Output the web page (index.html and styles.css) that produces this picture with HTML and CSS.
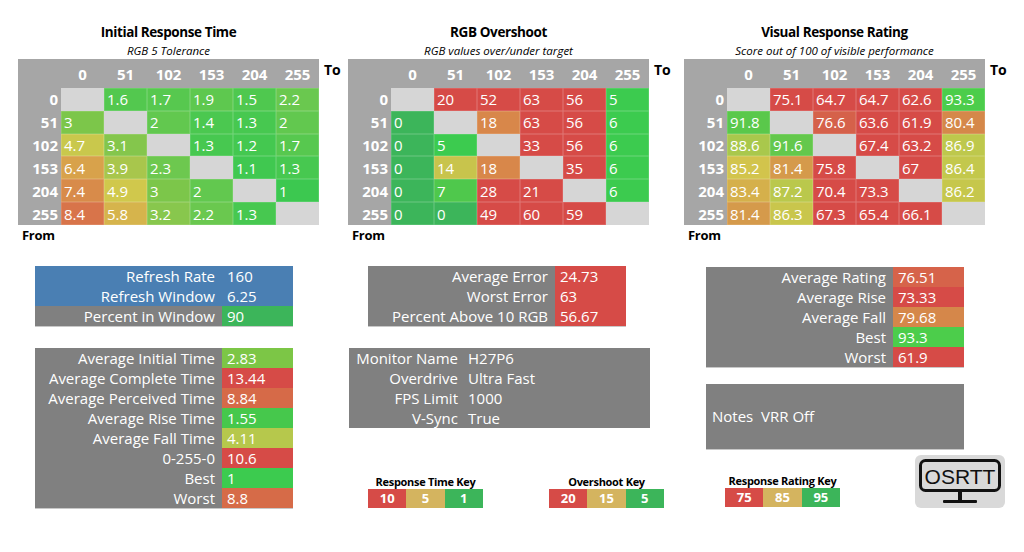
FILE: index.html
```html
<!DOCTYPE html>
<html>
<head>
<meta charset="utf-8">
<title>OSRTT Results</title>
<link rel="stylesheet" href="styles.css">
</head>
<body>
<div class="page">
  <section class="top">
    <div class="panel p1">
      <div class="title">Initial Response Time</div>
      <div class="subtitle">RGB 5 Tolerance</div>
      <div class="gridrow">
        <div class="hm">
          <div class="h"></div><div class="h">0</div><div class="h">51</div><div class="h">102</div><div class="h">153</div><div class="h">204</div><div class="h">255</div>
          <div class="rl">0</div><div class="e"></div><div class="c" style="background:#53c84f">1.6</div><div class="c" style="background:#57c84f">1.7</div><div class="c" style="background:#5ec84f">1.9</div><div class="c" style="background:#4fc84f">1.5</div><div class="c" style="background:#6ac84f">2.2</div>
          <div class="rl">51</div><div class="c" style="background:#7cc64a">3</div><div class="e"></div><div class="c" style="background:#62c84f">2</div><div class="c" style="background:#4bc850">1.4</div><div class="c" style="background:#47c850">1.3</div><div class="c" style="background:#62c84f">2</div>
          <div class="rl">102</div><div class="c" style="background:#c9c84c">4.7</div><div class="c" style="background:#84c64c">3.1</div><div class="e"></div><div class="c" style="background:#47c850">1.3</div><div class="c" style="background:#44c850">1.2</div><div class="c" style="background:#57c84f">1.7</div>
          <div class="rl">153</div><div class="c" style="background:#d8a24b">6.4</div><div class="c" style="background:#a8c64c">3.9</div><div class="c" style="background:#6dc84f">2.3</div><div class="e"></div><div class="c" style="background:#40c850">1.1</div><div class="c" style="background:#47c850">1.3</div>
          <div class="rl">204</div><div class="c" style="background:#d88b4a">7.4</div><div class="c" style="background:#d0c84c">4.9</div><div class="c" style="background:#7cc64a">3</div><div class="c" style="background:#62c84f">2</div><div class="e"></div><div class="c" style="background:#3cc850">1</div>
          <div class="rl">255</div><div class="c" style="background:#d8744a">8.4</div><div class="c" style="background:#d6b44c">5.8</div><div class="c" style="background:#88c74d">3.2</div><div class="c" style="background:#6ac84f">2.2</div><div class="c" style="background:#47c850">1.3</div><div class="e"></div>
        </div>
        <div class="to">To</div>
      </div>
      <div class="from">From</div>
    </div>

    <div class="panel p2">
      <div class="title">RGB Overshoot</div>
      <div class="subtitle">RGB values over/under target</div>
      <div class="gridrow">
        <div class="hm">
          <div class="h"></div><div class="h">0</div><div class="h">51</div><div class="h">102</div><div class="h">153</div><div class="h">204</div><div class="h">255</div>
          <div class="rl">0</div><div class="e"></div><div class="c r">20</div><div class="c r">52</div><div class="c r">63</div><div class="c r">56</div><div class="c lg">5</div>
          <div class="rl">51</div><div class="c g">0</div><div class="e"></div><div class="c" style="background:#d8874a">18</div><div class="c r">63</div><div class="c r">56</div><div class="c lg">6</div>
          <div class="rl">102</div><div class="c g">0</div><div class="c lg">5</div><div class="e"></div><div class="c r">33</div><div class="c r">56</div><div class="c lg">6</div>
          <div class="rl">153</div><div class="c g">0</div><div class="c" style="background:#c8c44c">14</div><div class="c" style="background:#d8874a">18</div><div class="e"></div><div class="c r">35</div><div class="c lg">6</div>
          <div class="rl">204</div><div class="c g">0</div><div class="c" style="background:#4fc84c">7</div><div class="c r">28</div><div class="c r">21</div><div class="e"></div><div class="c lg">6</div>
          <div class="rl">255</div><div class="c g">0</div><div class="c g">0</div><div class="c r">49</div><div class="c r">60</div><div class="c r">59</div><div class="e"></div>
        </div>
        <div class="to">To</div>
      </div>
      <div class="from">From</div>
    </div>

    <div class="panel p3">
      <div class="title">Visual Response Rating</div>
      <div class="subtitle">Score out of 100 of visible performance</div>
      <div class="gridrow">
        <div class="hm">
          <div class="h"></div><div class="h">0</div><div class="h">51</div><div class="h">102</div><div class="h">153</div><div class="h">204</div><div class="h">255</div>
          <div class="rl">0</div><div class="e"></div><div class="c r">75.1</div><div class="c r">64.7</div><div class="c r">64.7</div><div class="c r">62.6</div><div class="c" style="background:#4ccd4b">93.3</div>
          <div class="rl">51</div><div class="c" style="background:#5ac84b">91.8</div><div class="e"></div><div class="c" style="background:#d5614a">76.6</div><div class="c r">63.6</div><div class="c r">61.9</div><div class="c" style="background:#d5884a">80.4</div>
          <div class="rl">102</div><div class="c" style="background:#a9c84c">88.6</div><div class="c" style="background:#64c84c">91.6</div><div class="e"></div><div class="c r">67.4</div><div class="c r">63.2</div><div class="c" style="background:#bec84c">86.9</div>
          <div class="rl">153</div><div class="c" style="background:#d2c44c">85.2</div><div class="c" style="background:#d59a4b">81.4</div><div class="c r">75.8</div><div class="e"></div><div class="c r">67</div><div class="c" style="background:#c3c84c">86.4</div>
          <div class="rl">204</div><div class="c" style="background:#d5b04b">83.4</div><div class="c" style="background:#bac84c">87.2</div><div class="c r">70.4</div><div class="c r">73.3</div><div class="e"></div><div class="c" style="background:#c6c74c">86.2</div>
          <div class="rl">255</div><div class="c" style="background:#d59a4b">81.4</div><div class="c" style="background:#c9c64c">86.3</div><div class="c r">67.3</div><div class="c r">65.4</div><div class="c r">66.1</div><div class="e"></div>
        </div>
        <div class="to">To</div>
      </div>
      <div class="from">From</div>
    </div>
  </section>

  <section class="bottom">
    <div class="col col1">
      <div class="box kv">
        <div class="lbl blue">Refresh Rate</div><div class="val blue">160</div>
        <div class="lbl blue">Refresh Window</div><div class="val blue">6.25</div>
        <div class="lbl">Percent in Window</div><div class="val g">90</div>
      </div>
      <div class="box kv">
        <div class="lbl">Average Initial Time</div><div class="val" style="background:#7cc646">2.83</div>
        <div class="lbl">Average Complete Time</div><div class="val r">13.44</div>
        <div class="lbl">Average Perceived Time</div><div class="val" style="background:#d66a48">8.84</div>
        <div class="lbl">Average Rise Time</div><div class="val" style="background:#46c84c">1.55</div>
        <div class="lbl">Average Fall Time</div><div class="val" style="background:#b6c84c">4.11</div>
        <div class="lbl">0-255-0</div><div class="val r">10.6</div>
        <div class="lbl">Best</div><div class="val lg">1</div>
        <div class="lbl">Worst</div><div class="val" style="background:#d66b48">8.8</div>
      </div>
    </div>

    <div class="col col2">
      <div class="box kv indent">
        <div class="lbl">Average Error</div><div class="val r">24.73</div>
        <div class="lbl">Worst Error</div><div class="val r">63</div>
        <div class="lbl">Percent Above 10 RGB</div><div class="val r">56.67</div>
      </div>
      <div class="box info">
        <div class="lbl">Monitor Name</div><div class="val">H27P6</div>
        <div class="lbl">Overdrive</div><div class="val">Ultra Fast</div>
        <div class="lbl">FPS Limit</div><div class="val">1000</div>
        <div class="lbl">V-Sync</div><div class="val">True</div>
      </div>
      <div class="keys">
        <div class="key">
          <div class="key-title">Response Time Key</div>
          <div class="key-bar"><span class="r">10</span><span class="t">5</span><span class="g">1</span></div>
        </div>
        <div class="key">
          <div class="key-title">Overshoot Key</div>
          <div class="key-bar"><span class="r">20</span><span class="t">15</span><span class="g">5</span></div>
        </div>
      </div>
    </div>

    <div class="col col3">
      <div class="box kv">
        <div class="lbl">Average Rating</div><div class="val" style="background:#d6634a">76.51</div>
        <div class="lbl">Average Rise</div><div class="val r">73.33</div>
        <div class="lbl">Average Fall</div><div class="val" style="background:#d5874a">79.68</div>
        <div class="lbl">Best</div><div class="val" style="background:#4ccd4b">93.3</div>
        <div class="lbl">Worst</div><div class="val r">61.9</div>
      </div>
      <div class="box notes">Notes&nbsp;&nbsp;VRR Off</div>
      <div class="foot">
        <div class="key">
          <div class="key-title">Response Rating Key</div>
          <div class="key-bar"><span class="r">75</span><span class="t">85</span><span class="g">95</span></div>
        </div>
        <div class="logo">
          <svg width="90" height="53" viewBox="0 0 90 53">
            <rect x="5.5" y="5.5" width="79" height="30" rx="5" fill="none" stroke="#111" stroke-width="3"/>
            <text x="45" y="28.5" text-anchor="middle" class="logo-text">OSRTT</text>
            <rect x="43" y="35" width="4" height="11" fill="#111"/>
            <rect x="28" y="45" width="34" height="3" rx="1" fill="#111"/>
          </svg>
        </div>
      </div>
    </div>
  </section>
</div>
</body>
</html>
```

FILE: styles.css
```css
* { box-sizing: border-box; }
html, body { margin: 0; padding: 0; background: #fff; }
body {
  font-family: "Open Sans", Lato, "Liberation Sans", sans-serif;
  color: #000;
  width: 1024px;
  height: 552px;
  overflow: hidden;
}

.top {
  display: flex;
  padding-top: 22px;
}
.panel { display: flex; flex-direction: column; flex: none; }
.p1 { margin-left: 18px; width: 330px; }
.p2 { width: 336px; }
.p3 { width: 340px; }

.title {
  width: 301px;
  text-align: center;
  font-weight: 700;
  font-size: 13.5px;
  letter-spacing: -0.4px;
  line-height: 20px;
  height: 20px;
}
.subtitle {
  width: 301px;
  text-align: center;
  font-style: italic;
  font-size: 11.5px;
  line-height: 17px;
  height: 17px;
}

.gridrow { display: flex; align-items: flex-start; }
.hm {
  display: grid;
  grid-template-columns: repeat(7, 43px);
  grid-template-rows: 29px repeat(6, 22.83px);
  background: #a6a6a6;
  width: 301px;
  flex: none;
}
.hm > div {
  color: #fff;
  font-size: 15px;
  display: flex;
  align-items: center;
  white-space: nowrap;
}
.hm .h { justify-content: center; font-weight: 700; padding-top: 1px; }
.hm .rl { justify-content: flex-end; font-weight: 700; padding-right: 3px; }
.hm .e { background: #d6d6d6; }
.hm .c { padding-left: 3px; box-shadow: inset 0 0 0 0.5px rgba(255,255,255,0.25); }

.to {
  font-weight: 700;
  font-size: 14px;
  line-height: 18px;
  margin-top: 2px;
  margin-left: 5px;
}
.from {
  font-weight: 700;
  font-size: 13px;
  letter-spacing: -0.3px;
  line-height: 18px;
  margin-top: 1px;
  padding-left: 4px;
}

.r { background: #d64b47; }
.g { background: #3cb55a; }
.lg { background: #3ccb4f; }
.t { background: #d4b45f; }
.blue { background: #4a7fb3; }

.bottom {
  display: flex;
  margin-top: 22px;
}
.col { display: flex; flex-direction: column; flex: none; }
.col1 { margin-left: 35px; width: 258px; }
.col2 { margin-left: 56px; width: 301px; }
.col3 { margin-left: 56px; width: 300px; }

.box {
  background: #808080;
  color: #fff;
  font-size: 15px;
}
.kv {
  display: grid;
  grid-template-columns: 187px 71px;
  grid-auto-rows: 20px;
  width: 258px;
  border-bottom: 1px solid #c8c8c8;
}
.kv .lbl, .kv .val, .info .lbl, .info .val {
  line-height: 20px;
  white-space: nowrap;
}
.kv .lbl { text-align: right; padding-right: 7px; }
.kv .val { padding-left: 5px; }
.col1 .kv + .kv { margin-top: 21px; }
.indent { margin-left: 19px; }

.info {
  display: grid;
  grid-template-columns: 113px 188px;
  grid-auto-rows: 20px;
  margin-top: 21px;
  width: 301px;
}
.info .lbl { text-align: right; padding-right: 4px; }
.info .val { padding-left: 6px; }

.col3 .kv { height: 101px; margin-top: 1px; }

.notes {
  margin-top: 16px;
  width: 258px;
  height: 66px;
  display: flex;
  align-items: center;
  padding-left: 6px;
  border-bottom: 1px solid #c8c8c8;
}

.keys {
  display: flex;
  margin-top: 46px;
  margin-left: 19px;
  gap: 66px;
}
.key { display: flex; flex-direction: column; align-items: center; width: 115px; }
.key-title {
  font-weight: 700;
  font-size: 11px;
  letter-spacing: -0.3px;
  line-height: 15px;
  white-space: nowrap;
}
.key-bar { display: flex; width: 115px; height: 19px; }
.key-bar span {
  flex: 1;
  color: #fff;
  font-weight: 700;
  font-size: 13px;
  display: flex;
  align-items: center;
  justify-content: center;
}

.foot {
  display: flex;
  align-items: flex-end;
  margin-top: 5px;
}
.foot .key { margin-left: 19px; margin-bottom: 1px; }
.logo {
  margin-left: auto;
  margin-right: 1px;
  width: 90px;
  height: 53px;
  background: #d9d9d9;
  border-radius: 6px;
}
.logo svg { display: block; }
.logo-text {
  font-family: "Liberation Sans", Arial, sans-serif;
  font-size: 21px;
  fill: #111;
}
```
